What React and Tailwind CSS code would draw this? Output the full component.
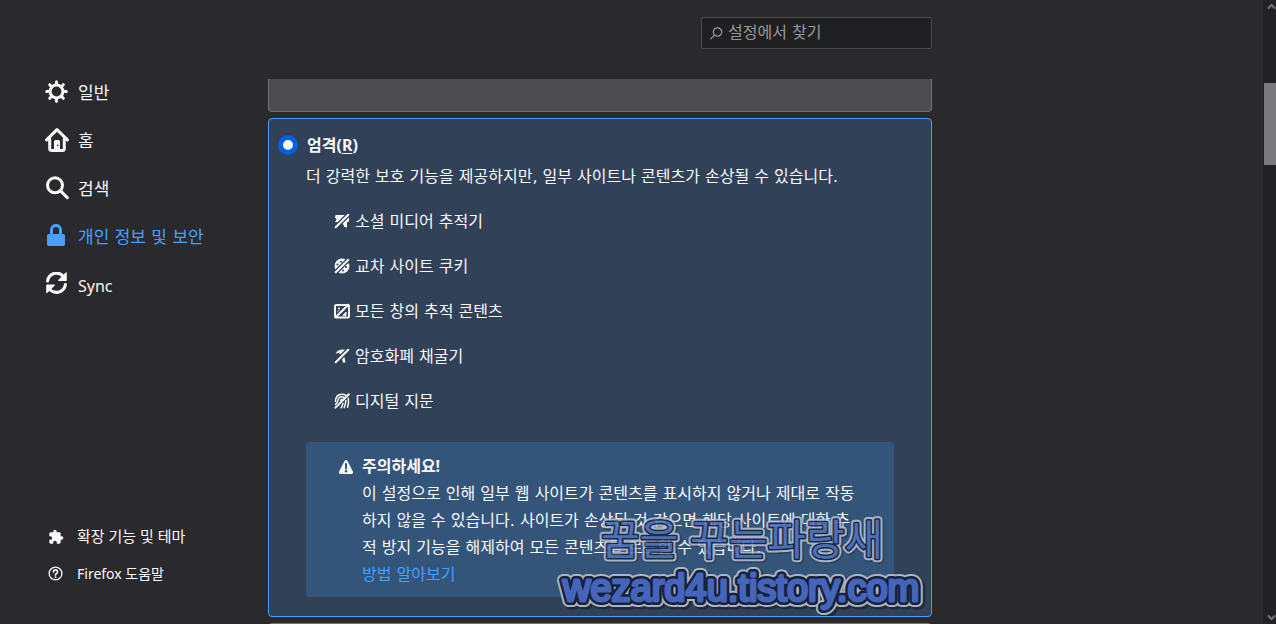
import React, { useState } from 'react';
import { MdExtension } from 'react-icons/md';

const GearIcon = () => (
  <svg width="24" height="24" viewBox="0 0 24 24" fill="none" stroke="currentColor" strokeWidth="3" strokeLinecap="round">
    <circle cx="11.5" cy="11.5" r="6.4" />
    <path d="M11.5 1.7v2.6M11.5 18.7v2.6M1.7 11.5h2.6M18.7 11.5h2.6M4.7 4.7l1.5 1.5M16.8 16.8l1.5 1.5M4.7 18.3l1.5-1.5M16.8 6.2l1.5-1.5" />
  </svg>
);

const HomeIcon = () => (
  <svg width="24" height="24" viewBox="0 0 24 24" fill="none" stroke="currentColor" strokeWidth="3" strokeLinecap="round" strokeLinejoin="round">
    <path d="M1.6 11.9 12 1.6l10.4 10.3" />
    <path d="M4.7 11v9.5a2 2 0 0 0 2 2h10.6a2 2 0 0 0 2-2V11" />
    <path fillRule="evenodd" stroke="none" fill="currentColor" d="M10.5 12h3a1.5 1.5 0 0 1 1.5 1.5V23H9v-9.5a1.5 1.5 0 0 1 1.5-1.5zM12.2 16.5v1.6h1.2v-1.6z" />
  </svg>
);

const SearchIcon = () => (
  <svg width="24" height="24" viewBox="0 0 24 24" fill="none" stroke="currentColor" strokeWidth="3" strokeLinecap="round">
    <circle cx="10" cy="9.3" r="7.5" />
    <path d="m15.6 14.9 6.7 6.7" />
  </svg>
);

const LockIcon = () => (
  <svg width="24" height="24" viewBox="0 0 24 24" fill="none">
    <path d="M6.5 11V5.9a4.5 4.5 0 0 1 9 0V11" stroke="currentColor" strokeWidth="3" />
    <rect x="2" y="10" width="18" height="12" rx="2" fill="currentColor" />
  </svg>
);

const SyncIcon = () => (
  <svg width="24" height="24" viewBox="0 0 24 24" fill="none" stroke="currentColor" strokeWidth="3" strokeLinecap="round">
    <path d="M2.6 9a9 9 0 0 1 15.8-4.6" />
    <path d="M20.4 12.5a9 9 0 0 1-15.8 4.6" />
    <path d="M21.8.8a.6.6 0 0 0-1-.4l-7.6 7.6a.6.6 0 0 0 .4 1h7.4a.8.8 0 0 0 .8-.8zM1.2 20.7a.6.6 0 0 0 1 .4l7.6-7.6a.6.6 0 0 0-.4-1H2a.8.8 0 0 0-.8.8z" fill="currentColor" stroke="none" />
  </svg>
);

const HelpIcon = () => (
  <svg width="16" height="16" viewBox="0 0 16 16" fill="none" stroke="currentColor" strokeLinecap="round">
    <circle cx="7.5" cy="7.5" r="6.4" strokeWidth="1.3" />
    <path d="M5.5 5.8a2 2 0 1 1 3.1 1.700c-.7.5-1.1.8-1.1 1.5" strokeWidth="1.7" />
    <circle cx="7.5" cy="11.2" r="1" fill="currentColor" stroke="none" />
  </svg>
);

// Diagonal strike shared by the tracker icons
const Slash = () => (
  <g strokeLinecap="round" fill="none">
    <path d="M14.500 1.500 1.500 14.500" stroke="#314157" strokeWidth="4.600" />
    <path d="M14.300 1.700 1.700 14.300" stroke="currentColor" strokeWidth="2" />
  </g>
);

const SocialIcon = () => (
  <svg width="16" height="16" viewBox="0 0 16 16" fill="currentColor">
    <path d="M1.500 2H15v7h-2v5.500L10.500 14 8 9.500 1 9l1.500-2.500L1 4.500z" />
    <Slash />
  </svg>
);

const CookieIcon = () => (
  <svg width="16" height="16" viewBox="0 0 16 16">
    <circle cx="8" cy="8" r="7.500" fill="currentColor" />
    <g fill="#314157">
      <circle cx="7" cy="3.800" r="1" />
      <circle cx="3.500" cy="6.500" r="1" />
      <circle cx="12" cy="9" r="1" />
      <circle cx="9" cy="12.500" r="1" />
      <path d="M11 0h5v6l-2.500-1z" />
    </g>
    <Slash />
  </svg>
);

const ContentIcon = () => (
  <svg width="16" height="16" viewBox="0 0 16 16" fill="none" stroke="currentColor">
    <path d="M4 11V8.500L5.500 7l2 2M9 12.500l3-3.500v3.500z" fill="currentColor" strokeWidth="1" />
    <circle cx="5" cy="5.500" r="1" fill="currentColor" stroke="none" />
    <Slash />
    <rect x="1" y="2" width="14" height="12.500" rx="1.500" strokeWidth="2" />
  </svg>
);

const MinerIcon = () => (
  <svg width="16" height="16" viewBox="0 0 16 16" fill="currentColor">
    <path d="M1.500 5.500C3 2.800 5.500 1.500 8 1.500l6 .500-2.500 4L10 7l1.500 7.500H8.800L7.500 7 5 5z" />
    <Slash />
  </svg>
);

const FingerprintIcon = () => (
  <svg width="16" height="16" viewBox="0 0 16 16" fill="none" stroke="currentColor" strokeWidth="1.5" strokeLinecap="round">
    <path d="M1.5 8.5C1.5 4 4 1.2 8 1.2c1.600 0 2.800.4 3.900 1.200" />
    <path d="M1.5 11.5c2-1.500 2.300-3 2.500-4.500C4.300 5 5.800 3.800 8 3.800c.7 0 1.400.2 2 .5" />
    <path d="M6.600 7.400C6.900 6.500 7.500 6.300 8 6.300" />
    <path d="M14.800 1.300 1.500 14.600" strokeWidth="2" />
    <path d="M14.300 5.300c.6 3.200.2 6-.8 9M11.800 7.600c0 2.700-.5 4.900-1.700 7.100M9 10.400c-.3 1.600-.9 3-1.900 4.300" />
  </svg>
);

const WarningIcon = () => (
  <svg width="16" height="16" viewBox="0 0 16 16">
    <path d="M8 1c.7 0 1.200.3 1.500.9l5.400 10.600c.6 1.200-.1 2.500-1.400 2.500h-11c-1.300 0-2-1.300-1.400-2.500L6.500 1.900C6.800 1.300 7.300 1 8 1z" fill="currentColor" />
    <path d="M8 5v4.500" stroke="#34547a" strokeWidth="2" strokeLinecap="round" />
    <circle cx="8" cy="12.300" r="1.200" fill="#34547a" />
  </svg>
);

const categories = [
  { id: 'general', title: '일반', icon: GearIcon },
  { id: 'home', title: '홈', icon: HomeIcon },
  { id: 'search', title: '검색', icon: SearchIcon },
  { id: 'privacy', title: '개인 정보 및 보안', icon: LockIcon },
  { id: 'sync', title: 'Sync', icon: SyncIcon },
];

const trackers = [
  { title: '소셜 미디어 추적기', icon: SocialIcon },
  { title: '교차 사이트 쿠키', icon: CookieIcon },
  { title: '모든 창의 추적 콘텐츠', icon: ContentIcon },
  { title: '암호화폐 채굴기', icon: MinerIcon },
  { title: '디지털 지문', icon: FingerprintIcon },
];

function Sidebar({ active, onSelect }) {
  return (
    <aside className="w-[268px] shrink-0 flex flex-col justify-between pt-[68px] pb-8">
      <nav className="flex flex-col">
        {categories.map((item) => (
          <button
            key={item.id}
            type="button"
            onClick={() => onSelect(item.id)}
            className={`h-12 pl-[45px] flex items-center gap-[9px] text-left cursor-pointer ${
              active === item.id ? 'text-[#45a1ff]' : ''
            }`}
          >
            <item.icon />
            <span
              className={
                item.id === 'sync'
                  ? "pt-[3px] text-[16px] font-['Noto_Sans','Noto_Sans_CJK_KR',sans-serif]"
                  : 'pt-[3px] text-[17px]'
              }
            >
              {item.title}
            </span>
          </button>
        ))}
      </nav>

      <div className="flex flex-col pl-12 font-['Noto_Sans','Noto_Sans_CJK_KR',sans-serif]">
        <a href="#addons" className="h-[37px] flex items-center gap-[13px] text-[15px]">
          <MdExtension size={16} />
          확장 기능 및 테마
        </a>
        <a href="#help" className="h-[37px] flex items-center gap-[13px] text-[14px]">
          <HelpIcon />
          Firefox 도움말
        </a>
      </div>
    </aside>
  );
}

function Watermark() {
  return (
    <svg className="absolute right-0 bottom-0 pointer-events-none" width="390" height="116" viewBox="0 0 390 116" strokeLinejoin="round" strokeLinecap="round">
      <defs>
        <text id="blog-name" x="60" y="55" fontFamily="'Noto Sans CJK KR', sans-serif" fontSize="42">꿈을 꾸는파랑새</text>
        <text id="blog-url" x="22" y="101" fontFamily="'Liberation Sans', sans-serif" fontSize="38">wezard4u.tistory.com</text>
      </defs>
      <g opacity="0.85">
        <use href="#blog-name" x="1" y="1" fill="none" stroke="#1b2536" strokeWidth="8" opacity="0.5" />
        <use href="#blog-name" fill="none" stroke="#b9c3d3" strokeWidth="7" />
        <use href="#blog-name" fill="none" stroke="#17233c" strokeWidth="3" />
        <use href="#blog-name" fill="#5273c4" />
      </g>
      <g opacity="0.95">
        <use href="#blog-url" x="2" y="2" fill="none" stroke="#151c29" strokeWidth="13" opacity="0.6" />
        <use href="#blog-url" fill="none" stroke="#b4bac5" strokeWidth="12" />
        <use href="#blog-url" fill="none" stroke="#14203a" strokeWidth="8" />
        <use href="#blog-url" fill="#4766be" stroke="#4766be" strokeWidth="3" />
      </g>
    </svg>
  );
}

function StrictCard() {
  return (
    <section className="relative rounded-[4px] border border-[#45a1ff] bg-[#314157] pt-3 pb-[19px]">
      <div className="flex items-center gap-[9px] pl-[9px] h-[27px]">
        <input
          id="strict"
          type="radio"
          name="protection"
          defaultChecked
          className="appearance-none size-5 rounded-full border-[5px] border-[#0060df] bg-white"
        />
        <label htmlFor="strict" className="font-bold font-['Noto_Sans','Noto_Sans_CJK_KR',sans-serif]">
          엄격(<span className="underline underline-offset-2">R</span>)
        </label>
      </div>

      <div className="px-[37px] leading-[27px]">
        <p className="mt-[5px]">더 강력한 보호 기능을 제공하지만, 일부 사이트나 콘텐츠가 손상될 수 있습니다.</p>

        <ul className="mt-2 pl-7">
          {trackers.map((tracker) => (
            <li key={tracker.title} className="h-[45px] flex items-center gap-[5px]">
              <tracker.icon />
              <span className="pt-[2px]">{tracker.title}</span>
            </li>
          ))}
        </ul>

        {/* Warning */}
        <div className="mt-[19px] rounded-[4px] bg-[#34547a] pt-[11px] pb-[9px] px-8 flex gap-2">
          <div className="h-[27px] flex items-center shrink-0">
            <WarningIcon />
          </div>
          <div>
            <h3 className="font-bold font-['Noto_Sans','Noto_Sans_CJK_KR',sans-serif]">주의하세요!</h3>
            <p>
              이 설정으로 인해 일부 웹 사이트가 콘텐츠를 표시하지 않거나 제대로 작동하지 않을 수 있습니다. 사이트가 손상된 것 같으면 해당 사이트에 대한 추적 방지 기능을 해제하여 모든 콘텐츠를 로드할 수 있습니다.
            </p>
            <a href="#learn" className="block w-fit text-[#45a1ff]">방법 알아보기</a>
          </div>
        </div>
      </div>

      <Watermark />
    </section>
  );
}

function Scrollbar() {
  return (
    <div className="w-[13px] shrink-0 bg-[#232327] flex flex-col justify-between">
      <div className="flex flex-col items-end">
        <svg width="9" height="14" viewBox="0 0 9 14" fill="none" stroke="#76767a" strokeWidth="2">
          <path d="M1 8.500 4.500 5 8 8.500" />
        </svg>
        <div className="mt-[69px] h-[82px] w-3 bg-[#7a7a7c]" />
      </div>
      <svg className="self-end" width="9" height="14" viewBox="0 0 9 14" fill="none" stroke="#76767a" strokeWidth="2">
        <path d="M1 5.500 4.500 9 8 5.500" />
      </svg>
    </div>
  );
}

export default function App() {
  const [active, setActive] = useState('privacy');
  const [query, setQuery] = useState('');

  return (
    <div className="h-screen flex overflow-hidden bg-[#2a2a2e] text-[#f9f9fa] text-[16px] font-['DejaVu_Sans','Noto_Sans_CJK_KR',sans-serif]" lang="ko">
      <Sidebar active={active} onSelect={setActive} />

      <main className="flex-1 min-w-0 flex flex-col">
        <div className="max-w-[664px] w-full flex justify-end pt-[17px] pb-[30px]">
          <label className="w-[231px] h-8 flex items-center gap-[5px] pl-2 rounded-[2px] border border-[#4a4a4e] bg-[#202023] text-[#98989b]">
            <svg width="13" height="13" viewBox="0 0 13 13" fill="none" stroke="currentColor" strokeWidth="1.2" strokeLinecap="round" role="img" aria-label="검색">
              <circle cx="7.5" cy="5" r="4.2" />
              <path d="M4.500 8 .800 11.900" />
            </svg>
            <input
              type="text"
              value={query}
              onChange={(e) => setQuery(e.target.value)}
              placeholder="설정에서 찾기"
              className="min-w-0 flex-1 bg-transparent outline-none placeholder:text-[#98989b]"
            />
          </label>
        </div>

        <div className="max-w-[664px] w-full flex-1 min-h-0 overflow-hidden flex flex-col gap-[6px] *:shrink-0">
          <div className="h-[33px] rounded-b-[4px] border border-t-0 border-[#737277] bg-[#4d4c51]" />
          <StrictCard />
          <div className="h-12 rounded-[4px] border border-[#737277] bg-[#4d4c51]" />
        </div>
      </main>

      <Scrollbar />
    </div>
  );
}
